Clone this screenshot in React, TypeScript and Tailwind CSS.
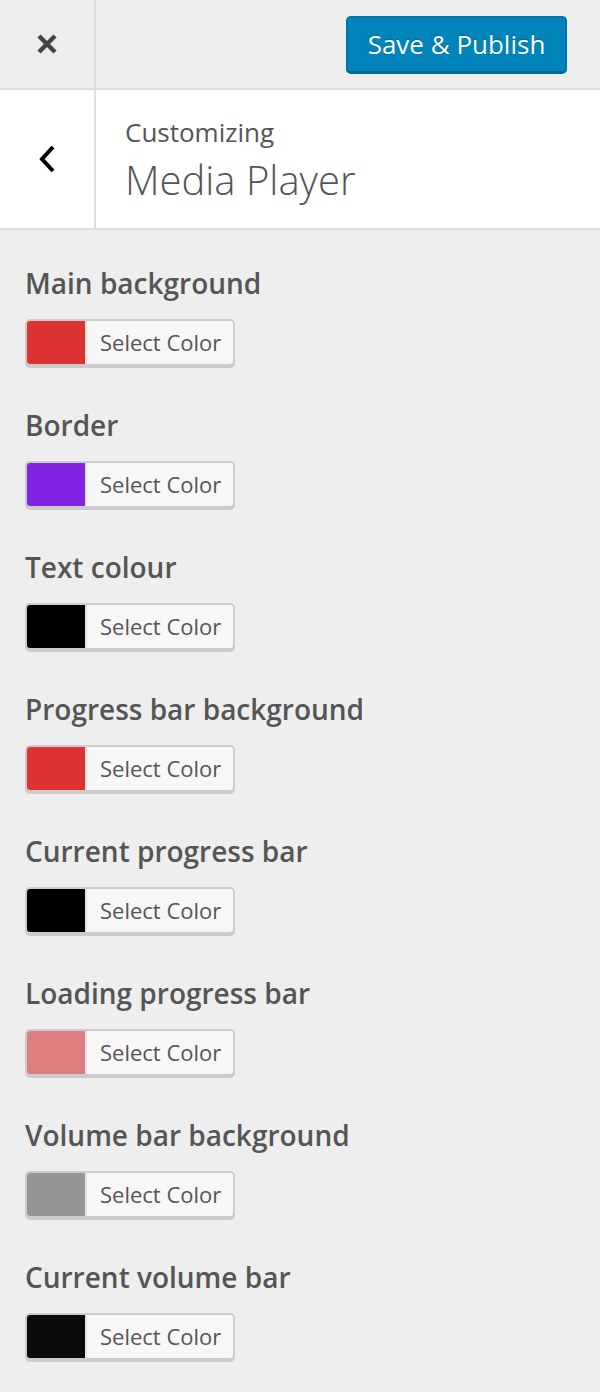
const fields = [
  { label: "Main background", color: "#dd3333" },
  { label: "Border", color: "#8224e3" },
  { label: "Text colour", color: "#000000" },
  { label: "Progress bar background", color: "#dd3333" },
  { label: "Current progress bar", color: "#000000" },
  { label: "Loading progress bar", color: "#dd7f7f" },
  { label: "Volume bar background", color: "#959595" },
  { label: "Current volume bar", color: "#0b0b0b" },
];

const ColorControl = ({ label, color }: { label: string; color: string }) => (
  <li className="mb-[40px]">
    <span className="block text-[28px] leading-[39px] font-semibold text-[#555555]">{label}</span>
    <button className="mt-[16px] flex h-[47px] w-[210px] items-stretch overflow-hidden rounded-[5px] border-2 border-[#cccccc] bg-[#f7f7f7] shadow-[0_2px_0_#cccccc]">
      <span className="w-[60px] shrink-0 border-r-2 border-[#e4e4e4]" style={{ backgroundColor: color }} />
      <span className="flex items-center pl-[13px] text-[22px] text-[#555555]">Select Color</span>
    </button>
  </li>
);

export default function App() {
  return (
    <div className="h-[1392px] w-[600px] overflow-hidden bg-[#eeeeee] font-['Open_Sans',sans-serif]">
      <div className="flex h-[90px] border-b-2 border-[#dddddd]">
        <div className="flex w-[96px] items-center justify-center border-r-2 border-[#dddddd]">
          <svg width="22" height="22" viewBox="0 0 22 22">
            <path d="M3 3 L19 19 M19 3 L3 19" stroke="#444444" strokeWidth="4.5" />
          </svg>
        </div>
        <div className="flex flex-1 items-start justify-end pr-[33px] pt-[16px]">
          <button className="h-[57px] w-[221px] rounded-[5px] border-2 border-[#0073aa] border-b-[#006799] bg-[#0085ba] text-[26px] text-white shadow-[0_1px_0_#006799] [text-shadow:0_-1px_1px_#006799]">
            Save &amp; Publish
          </button>
        </div>
      </div>

      <div className="flex h-[140px] border-b-2 border-[#dddddd] bg-white">
        <div className="flex w-[96px] items-center justify-center border-r-2 border-[#dddddd]">
          <svg width="18" height="28" viewBox="0 0 18 28">
            <path d="M15 2 L4 14 L15 26" fill="none" stroke="#000000" strokeWidth="4" />
          </svg>
        </div>
        <div className="flex flex-col justify-center pl-[29px] pt-[3px]">
          <span className="text-[26px] leading-[34px] text-[#555555]">Customizing</span>
          <span className="mt-[5px] text-[40px] leading-[52px] font-light text-[#555555]">Media Player</span>
        </div>
      </div>

      <ul className="px-[25px] pt-[34px]">
        {fields.map((f) => (
          <ColorControl key={f.label} label={f.label} color={f.color} />
        ))}
      </ul>
    </div>
  );
}
